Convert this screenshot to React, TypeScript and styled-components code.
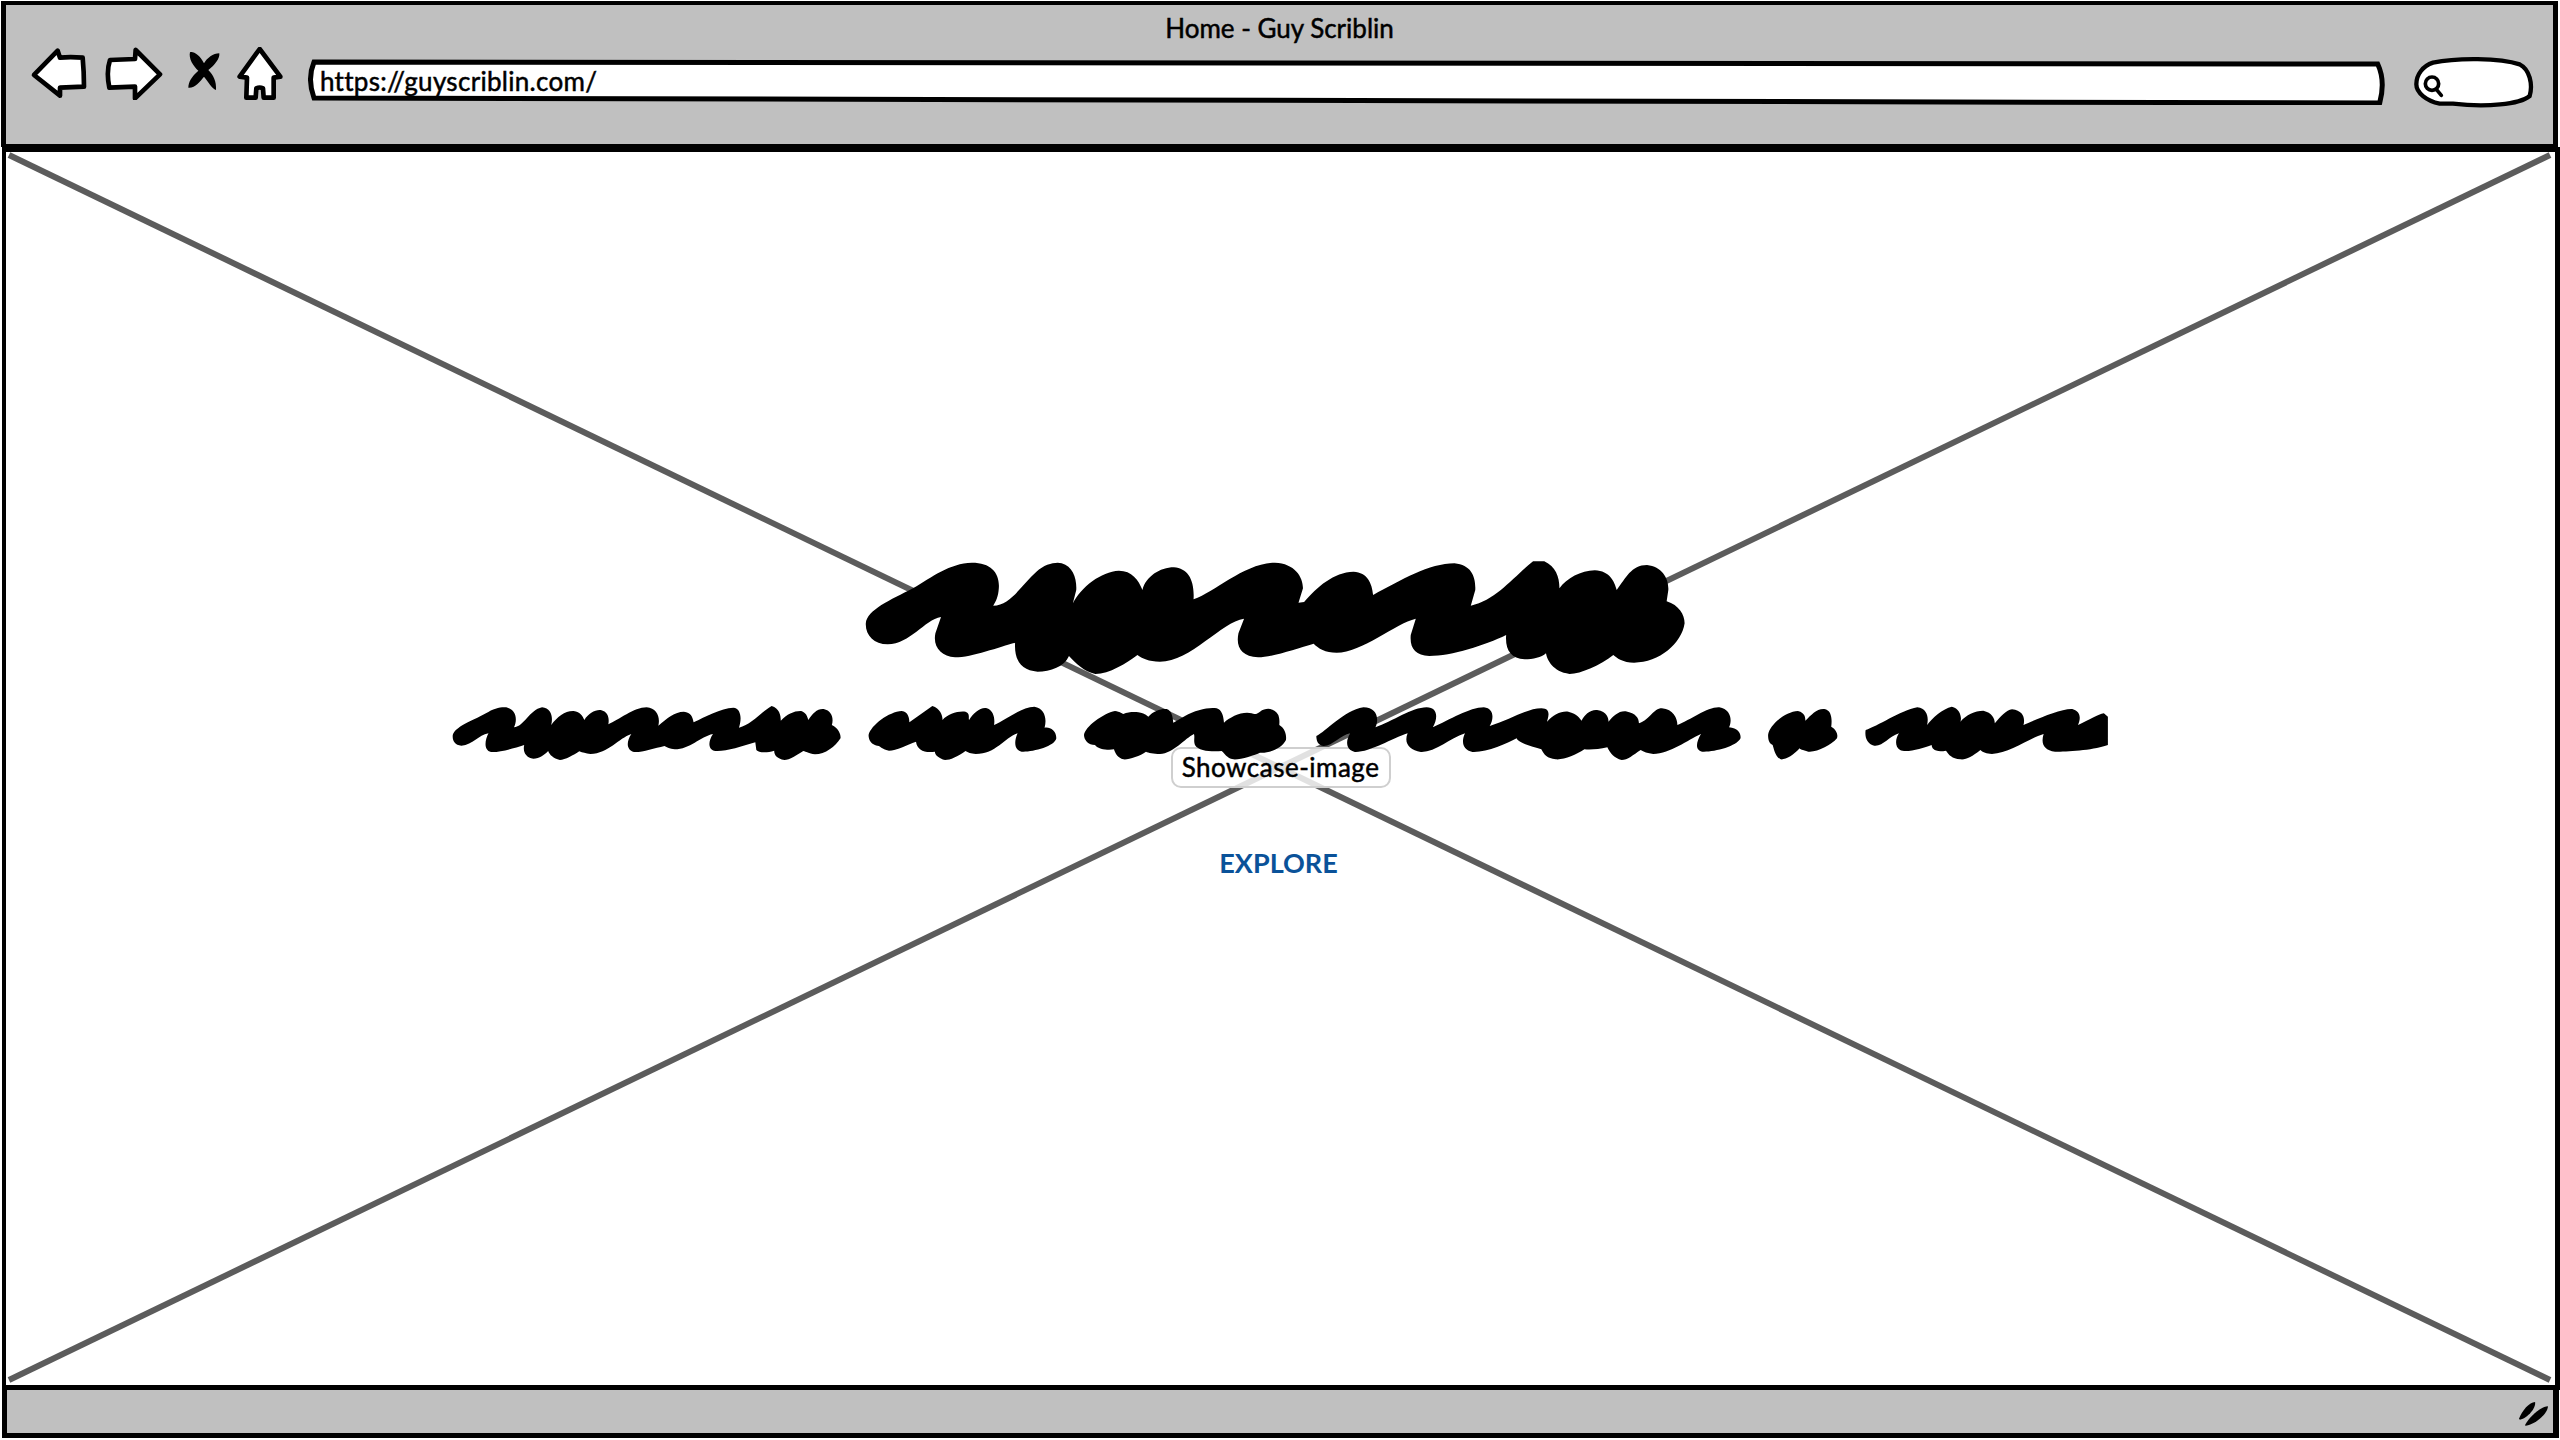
import React from "react";
import styled, { createGlobalStyle } from "styled-components";

const Global = createGlobalStyle`
  html, body { margin: 0; padding: 0; background: #fff; }
  body { font-family: "Lato", "Liberation Sans", sans-serif; color: #000; }
`;

const Page = styled.div`
  width: 2560px;
  height: 1440px;
  display: flex;
  flex-direction: column;
  overflow: hidden;
`;

const Header = styled.header`
  box-sizing: border-box;
  height: 146px;
  width: 2557px;
  margin: 1px 0 0 1px;
  background: #c0c0c0;
  border-style: solid;
  border-color: #000;
  border-width: 4px 5px 3px 5px;
  display: flex;
  flex-direction: column;
`;

const WindowTitle = styled.div`
  padding-top: 8px;
  height: 30px;
  line-height: 30px;
  text-align: center;
  font-size: 26px;
  -webkit-text-stroke: 0.5px #000;
  flex: none;
`;

const Toolbar = styled.div`
  display: flex;
  align-items: flex-start;
  padding: 3px 17px 0 24px;
`;

const NavIcon = styled.svg`
  display: block;
  flex: none;
  height: 53.33px;
  margin-top: 1px;
`;

const UrlBar = styled.div`
  position: relative;
  flex: 1;
  height: 46px;
  margin: 13px 0 0 23px;
`;

const UrlShape = styled.svg`
  position: absolute;
  inset: 0;
  width: 100%;
  height: 100%;
`;

const UrlText = styled.span`
  position: relative;
  display: block;
  padding-left: 12px;
  line-height: 44px;
  font-size: 26px;
  letter-spacing: 0.3px;
  -webkit-text-stroke: 0.5px #000;
`;

const SearchBox = styled.svg`
  display: block;
  flex: none;
  width: 123.33px;
  height: 55px;
  margin: 10px 0 0 28px;
`;

const Main = styled.main`
  position: relative;
  box-sizing: border-box;
  height: 1243px;
  width: 2558px;
  margin-left: 2px;
  border-style: solid;
  border-color: #000;
  border-width: 5px 5px 5px 4px;
  flex: none;
`;

const Placeholder = styled.svg`
  position: absolute;
  inset: 0;
  width: 100%;
  height: 100%;
`;

const Hero = styled.section`
  position: relative;
  display: flex;
  flex-direction: column;
  align-items: center;
  padding-top: 403px;
`;

const Scribble = styled.svg<{ $gap?: number }>`
  position: relative;
  z-index: 2;
  display: block;
  flex: none;
  margin-top: ${(p) => p.$gap ?? 0}px;
`;

const ImageTip = styled.div`
  position: absolute;
  z-index: 1;
  top: 595px;
  left: 50%;
  transform: translateX(-50%);
  box-sizing: border-box;
  height: 41px;
  width: 220px;
  border: 2px solid #cfcfcf;
  border-radius: 10px;
  background: rgba(255, 255, 255, 0.82);
  text-align: center;
  line-height: 37px;
  font-size: 26px;
  letter-spacing: 0.5px;
  -webkit-text-stroke: 0.5px #000;
  white-space: nowrap;
`;

const Explore = styled.a`
  position: relative;
  margin: 83px 4px 0 0;
  line-height: 30px;
  font-size: 27px;
  font-weight: 700;
  color: #0a5299;
`;

const Footer = styled.footer`
  box-sizing: border-box;
  height: 48px;
  width: 2557px;
  margin-left: 2px;
  background: #c0c0c0;
  border-style: solid;
  border-color: #000;
  border-width: 0 6px 5px 5px;
  display: flex;
  align-items: center;
  justify-content: flex-end;
  padding: 4px 3px 0 0;
  flex: none;
`;

const Grip = styled.svg`
  display: block;
  width: 34px;
  height: 28px;
`;

const titleWave =
  "M46 250 C48 210 90 180 130 145 C165 110 195 70 235 68 C270 68 285 100 283 145 C282 170 278 185 273 197 C305 197 325 130 350 95 C365 72 385 65 395 70 C415 80 422 115 421 150 L415 190 C430 140 465 95 497 92 C520 92 532 120 539 150 C545 110 570 82 595 82 C620 85 632 120 630 178 C670 155 720 70 775 68 C810 70 825 110 825 145 L817 188 L827 186 C850 140 880 97 915 95 C940 97 948 130 950 165 C1000 120 1050 70 1095 70 C1125 75 1133 110 1132 150 L1124 197 C1170 180 1200 110 1235 64 L1255 64 C1275 80 1282 110 1282 145 C1295 115 1320 92 1345 91 C1372 93 1380 125 1384 150 C1400 115 1410 75 1438 75 C1465 80 1477 115 1476 150 L1473 184 C1495 195 1505 225 1505 250 C1500 310 1460 368 1415 368 C1395 368 1385 355 1378 345 C1355 375 1320 402 1300 402 C1270 395 1260 360 1258 340 C1250 352 1235 358 1220 358 C1195 355 1185 330 1187 285 C1150 315 1090 348 1050 348 C1025 345 1015 325 1017 285 L1026 236 C990 250 930 338 885 338 C865 338 852 325 844 311 C815 325 770 352 745 352 C715 350 705 320 710 280 L720 236 C680 245 625 365 570 365 C550 365 538 355 530 345 C510 370 480 402 455 402 C435 395 420 370 408 348 C400 380 375 395 352 395 C325 392 310 365 312 308 C285 320 235 352 205 352 C180 350 165 320 170 280 L180 231 C150 240 125 312 85 313 C60 312 45 285 46 250 Z";

const words = [
  {
    t: "translate(440 690) scale(0.5102 0.3333)",
    d: "M25 135 C30 110 60 95 90 70 C105 55 120 50 130 52 C150 60 152 90 145 112 C165 110 175 60 200 52 C218 55 222 80 218 105 C230 80 245 62 262 63 C275 65 280 80 283 90 C290 70 305 58 315 60 C330 65 332 85 330 103 C350 90 380 52 405 52 C425 55 432 80 428 107 C445 85 460 65 478 65 C492 68 495 80 497 97 C520 80 550 55 575 53 C590 55 592 85 586 113 C610 105 630 65 650 48 C665 55 668 75 668 92 C680 72 695 62 708 63 C718 68 720 80 722 90 C730 70 740 55 752 57 C768 62 772 85 768 105 C782 115 786 135 785 145 C775 170 755 193 735 193 C722 190 718 185 712 183 C700 195 685 210 675 210 C660 205 655 195 655 182 C640 190 625 188 620 180 L618 157 C590 170 560 185 540 183 C525 180 525 155 535 132 C510 140 490 178 460 178 C450 176 445 172 440 168 C420 175 395 188 380 186 C365 180 365 155 375 132 C350 145 330 190 295 192 C285 190 280 188 273 184 C262 195 245 210 235 210 C222 205 215 195 212 183 C205 195 195 205 183 206 C168 203 162 185 165 165 C145 175 115 188 100 186 C85 180 88 150 95 130 C75 135 65 165 42 167 C28 165 24 150 25 135 Z",
  },
  {
    t: "translate(440 690) scale(0.5102 0.3333)",
    d: "M840 135 C845 105 880 65 905 63 C918 65 920 85 920 97 L965 48 C980 55 985 75 985 90 C995 72 1015 62 1030 65 C1040 70 1035 85 1037 90 C1045 70 1060 50 1072 55 C1085 62 1088 85 1086 105 C1110 90 1140 50 1165 50 C1185 55 1190 85 1185 113 C1195 110 1208 120 1208 145 C1205 170 1160 187 1140 185 C1125 180 1125 155 1132 130 C1105 145 1090 192 1050 192 C1040 190 1035 188 1030 183 C1015 200 1000 210 990 210 C978 205 970 195 970 185 C950 190 935 180 933 155 C915 165 895 182 880 182 C870 180 865 172 860 168 C845 165 840 150 840 135 Z",
  },
  {
    t: "translate(1070 690) scale(0.3333 0.3333)",
    d: "M42 135 C45 110 100 70 135 63 C150 65 155 70 160 72 C175 65 195 65 205 67 C215 68 225 72 235 80 C250 62 275 55 290 57 C305 62 308 78 310 98 L345 78 C375 60 420 50 440 55 C455 60 460 75 462 98 C480 80 520 62 545 70 C555 75 565 70 570 65 C590 50 615 55 625 75 C630 90 628 100 628 105 C645 115 650 135 648 150 C635 175 600 190 570 188 C555 195 510 210 490 208 C470 205 465 190 455 183 C430 185 385 185 375 165 C370 150 375 145 372 132 C345 145 310 190 270 192 C250 192 235 188 228 185 C210 198 175 210 160 208 C145 205 135 190 132 178 C115 182 85 178 75 165 C55 165 42 150 42 135 Z",
  },
  {
    t: "translate(1240 690) scale(0.574 0.3333)",
    d: "M133 138 C150 125 180 62 215 52 C238 52 243 85 236 112 C265 95 300 52 325 52 C345 52 345 85 336 112 C365 90 400 52 425 52 C442 55 443 85 435 108 C470 90 500 55 525 55 C545 55 535 90 535 95 C545 75 560 62 572 65 C588 72 592 85 595 92 C600 75 610 58 622 60 C640 65 642 85 642 95 C650 78 660 62 672 64 C690 70 695 85 695 100 C715 88 720 55 735 55 C755 58 762 85 762 105 C785 90 815 50 835 52 C855 58 858 90 852 112 C868 115 873 130 872 145 C865 170 825 187 805 185 C792 180 795 155 803 132 C780 150 750 190 720 192 C710 190 703 185 698 180 C685 195 675 210 665 210 C652 205 645 190 640 172 C625 178 610 180 600 178 C585 195 565 210 550 208 C535 205 530 195 525 178 C510 170 485 160 482 145 C465 160 430 188 405 186 C388 180 385 155 392 130 C365 145 340 188 315 186 C295 180 285 160 292 130 C265 145 225 188 200 186 C185 180 183 155 192 130 C175 135 160 170 145 168 C135 165 133 150 133 138 Z",
  },
  {
    t: "translate(1240 690) scale(0.574 0.3333)",
    d: "M920 135 C922 105 950 65 972 63 C985 68 985 85 985 92 C995 75 1005 55 1018 57 C1030 60 1032 85 1030 110 C1040 120 1042 135 1040 145 C1030 165 1005 188 990 185 C980 180 975 178 975 175 C965 195 950 210 942 208 C932 200 930 175 928 165 C922 160 920 150 920 135 Z",
  },
  {
    t: "translate(1240 690) scale(0.574 0.3333)",
    d: "M1090 120 C1110 110 1150 62 1180 52 C1198 55 1200 85 1197 105 C1205 85 1225 55 1240 50 C1255 55 1258 85 1255 95 C1265 75 1280 62 1295 62 C1310 68 1315 85 1315 100 C1325 80 1335 60 1345 58 C1365 62 1368 85 1365 105 C1385 90 1430 55 1450 57 C1465 65 1465 85 1460 105 C1480 90 1495 72 1505 70 L1512 80 L1512 165 C1490 180 1440 186 1420 185 C1400 180 1395 160 1400 132 C1375 145 1340 190 1310 192 C1300 190 1295 188 1290 180 C1275 200 1265 210 1255 208 C1240 205 1235 195 1230 182 C1210 188 1205 175 1205 165 C1190 175 1160 190 1150 180 C1140 170 1142 145 1148 130 C1130 140 1120 170 1105 167 C1092 162 1088 140 1090 120 Z",
  },
];

export default function App() {
  return (
    <Page>
      <Global />
      <Header>
        <WindowTitle>Home - Guy Scriblin</WindowTitle>
        <Toolbar>
          <NavIcon viewBox="30 36 195 160" width={65} aria-label="Back">
            <path d="M42 120 L113 47 L120 68 Q150 65 188 68 Q192 110 192 155 L120 158 L120 182 Z" fill="#fff" stroke="#000" strokeWidth={14} strokeLinejoin="round" />
          </NavIcon>
          <NavIcon viewBox="225 36 240 160" width={80} aria-label="Forward">
            <path d="M420 118 L347 45 L345 72 L270 75 Q258 110 268 158 L345 155 L345 190 Z" fill="#fff" stroke="#000" strokeWidth={14} strokeLinejoin="round" />
          </NavIcon>
          <NavIcon viewBox="465 36 160 160" width={53.33} aria-label="Stop">
            <path d="M552 85 C540 60 520 48 510 52 C505 70 520 95 535 107 C515 125 505 140 505 158 C525 160 540 140 552 125 C565 140 575 160 588 165 C590 140 580 120 565 105 C585 90 600 70 598 55 C580 55 560 70 552 85 Z" fill="#000" />
          </NavIcon>
          <NavIcon viewBox="625 36 170 160" width={56.67} aria-label="Home">
            <path d="M720 42 L660 125 L682 128 L680 188 L708 188 L710 160 Q720 155 730 160 L732 188 L762 188 L762 128 L782 125 Z" fill="#fff" stroke="#000" strokeWidth={14} strokeLinejoin="round" />
          </NavIcon>
          <UrlBar>
            <UrlShape viewBox="0 0 2077 46" preserveAspectRatio="none">
              <path d="M6 3 L2070 5 Q2078 22 2072 44 L6 39 Q-1 20 6 3 Z" fill="#fff" stroke="#000" strokeWidth={5} />
            </UrlShape>
            <UrlText>https://guyscriblin.com/</UrlText>
          </UrlBar>
          <SearchBox viewBox="640 165 370 165">
            <path d="M700 185 C770 170 900 170 960 190 C990 205 1000 250 990 285 C960 310 860 320 760 308 L720 308 C680 300 650 275 650 250 C650 220 670 195 700 185 Z" fill="#fff" stroke="#000" strokeWidth={13} />
            <circle cx={697} cy={248} r={20} fill="none" stroke="#000" strokeWidth={11} />
            <line x1={710} y1={265} x2={725} y2={283} stroke="#000" strokeWidth={11} strokeLinecap="round" />
          </SearchBox>
        </Toolbar>
      </Header>
      <Main>
        <Placeholder viewBox="0 0 2549 1233" preserveAspectRatio="none">
          <line x1={3} y1={3} x2={2544} y2={1228} stroke="#5c5c5c" strokeWidth={6} />
          <line x1={2544} y1={3} x2={3} y2={1228} stroke="#5c5c5c" strokeWidth={6} />
        </Placeholder>
        <Hero>
          <Scribble viewBox="860 555 841 125" width={841} height={125}>
            <path transform="translate(840 540) scale(0.5612 0.3333)" d={titleWave} />
          </Scribble>
          <Scribble $gap={20} viewBox="450 700 1662 65" width={1662} height={65}>
            {words.map((w) => (
              <path key={w.d.slice(0, 12)} transform={w.t} d={w.d} />
            ))}
          </Scribble>
          <Explore>EXPLORE</Explore>
        </Hero>
        <ImageTip>Showcase-image</ImageTip>
      </Main>
      <Footer>
        <Grip viewBox="640 180 114 92">
          <path d="M650 242 C660 215 685 186 704 186 C708 205 680 240 653 245 Z" />
          <path d="M670 264 C685 235 725 200 747 200 C748 220 710 260 673 265 Z" />
        </Grip>
      </Footer>
    </Page>
  );
}
